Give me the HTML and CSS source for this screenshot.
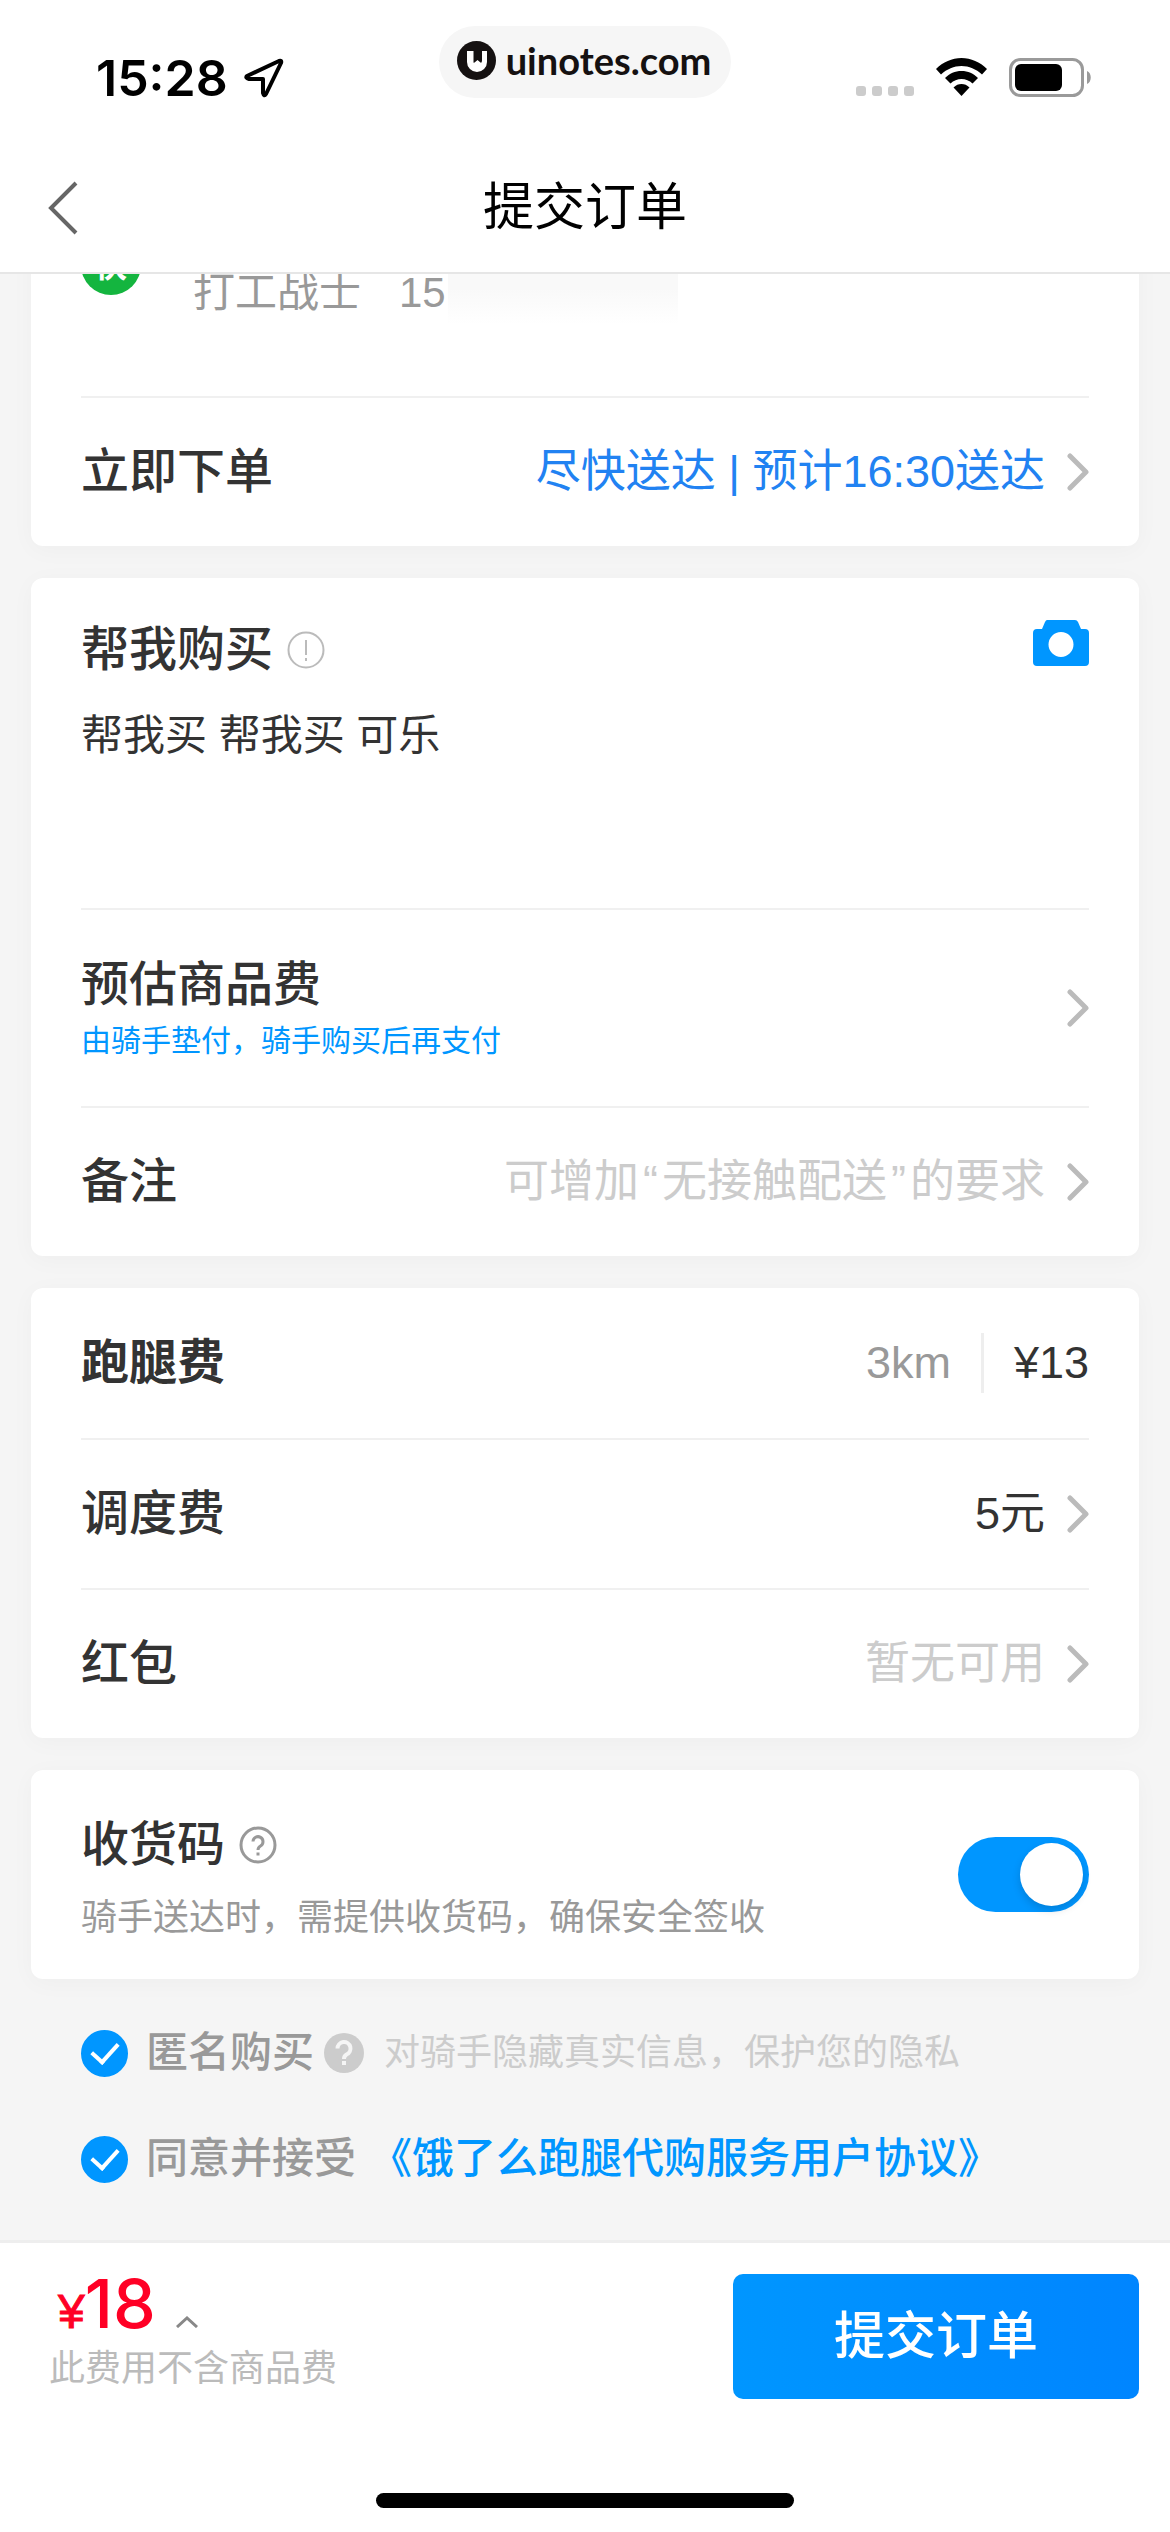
FILE: index.html
```html
<!DOCTYPE html>
<html lang="zh-CN">
<head>
    <meta charset="UTF-8">
    <meta name="viewport" content="width=device-width, initial-scale=1.0">
    <title>提交订单</title>
    <link rel="stylesheet" href="styles.css">
</head>
<body>

    <header class="top">
        <div class="status-bar">
            <div class="status-left">
                <span class="time">15:28</span>
                <svg width="40" height="40" viewBox="0 0 40 40" fill="none" stroke="#000" stroke-width="4" stroke-linejoin="round">
                    <path d="M3 18 L35 3 Q38 2 37 5 L22 36 Q20 39 19 35 V21 H5 Q1 20 3 18 Z"/>
                </svg>
            </div>
            <div class="site-badge">
                <svg width="39" height="39" viewBox="0 0 39 39">
                    <circle cx="19.500" cy="19.500" r="19.500" fill="#151111"/>
                    <path fill="#fff" d="M10 10h6.500v11c0 1 .5 1 1 .5l3-2.500 3 2.500c.5.5 1 .5 1-.5V10H30v11a10 10 0 0 1-20 0z"/>
                    <path fill="#151111" d="M17 9h8v12l-4-3-4 3z"/>
                </svg>
                <span>uinotes.com</span>
            </div>
            <div class="status-right">
                <span class="signal"><i></i><i></i><i></i><i></i></span>
                <svg class="wifi" width="51" height="38" viewBox="0 0 51 38">
                    <path d="M25.500 0C35 0 44 4 51 11l-5 5.500C40 11 33 8 25.500 8S11 11 5 16.500L0 11C7 4 16 0 25.500 0z"/>
                    <path d="M25.500 13c6.500 0 12 2.500 16.500 7l-5.500 5.500c-3-3-7-4.500-11-4.500s-8 1.500-11 4.500L9 20c4.500-4.500 10-7 16.500-7z"/>
                    <path d="M25.500 26c3 0 5.500 1 8 3.500L25.500 38l-8-8.500c2.500-2.500 5-3.500 8-3.500z"/>
                </svg>
                <svg width="83" height="40" viewBox="0 0 83 40">
                    <rect x="1.500" y="1.500" width="72" height="36" rx="10" fill="none" stroke="#9a9a9a" stroke-width="3"/>
                    <rect x="6" y="6" width="47" height="27" rx="6"/>
                    <path d="M78 13c5 2 5 11 0 13z" fill="#9a9a9a"/>
                </svg>
            </div>
        </div>
        <nav class="nav">
            <button class="back" type="button" aria-label="返回">
                <svg width="30" height="54" viewBox="0 0 30 54" fill="none" stroke="#666" stroke-width="4">
                    <path d="M28 2 L3 27 L28 52"/>
                </svg>
            </button>
            <h1>提交订单</h1>
        </nav>
    </header>

    <main>
        <section class="card card-first">
            <div class="receiver">
                <span class="receiver-icon">快</span>
                <span class="receiver-text">打工战士</span>
                <span class="receiver-text">15</span>
                <span class="phone-mask"></span>
            </div>
            <button class="row" type="button">
                <span class="label">立即下单</span>
                <span class="value value-time">尽快送达 | 预计16:30送达</span>
                <svg class="arrow" viewBox="0 0 22 38"><path d="M3 3 L19 19 L3 35"/></svg>
            </button>
        </section>

        <section class="card">
            <div class="buy">
                <div class="buy-head">
                    <label class="label" for="goods">帮我购买</label>
                    <button class="icon-btn" type="button" aria-label="购买说明">
                        <svg width="38" height="38" viewBox="0 0 38 38" fill="none" stroke="#bbb" stroke-width="2">
                            <circle cx="19" cy="19" r="17.500"/>
                            <path d="M19 9v15M19 27v3"/>
                        </svg>
                    </button>
                    <button class="icon-btn camera" type="button" aria-label="上传照片">
                        <svg width="56" height="46" viewBox="0 0 56 46">
                            <path fill="#0096ff" fill-rule="evenodd" d="M14 0h28q2 0 3 2l3 7h4q4 0 4 4v29q0 4-4 4H4q-4 0-4-4V13q0-4 4-4h5l3-7q1-2 2-2zM28 12a12.500 12.500 0 1 0 0 25a12.500 12.500 0 1 0 0-25z"/>
                        </svg>
                    </button>
                </div>
                <textarea id="goods" class="goods">帮我买 帮我买 可乐</textarea>
            </div>
            <button class="row row-tall" type="button">
                <span class="label">
                    预估商品费
                    <small>由骑手垫付，骑手购买后再支付</small>
                </span>
                <svg class="arrow" viewBox="0 0 22 38"><path d="M3 3 L19 19 L3 35"/></svg>
            </button>
            <button class="row" type="button">
                <span class="label">备注</span>
                <span class="value value-empty">可增加<span class="quote">“</span>无接触配送<span class="quote">”</span>的要求</span>
                <svg class="arrow" viewBox="0 0 22 38"><path d="M3 3 L19 19 L3 35"/></svg>
            </button>
        </section>

        <section class="card">
            <div class="row">
                <span class="label label-fee">跑腿费</span>
                <span class="value distance">3km</span>
                <span class="value fee">¥13</span>
            </div>
            <button class="row" type="button">
                <span class="label">调度费</span>
                <span class="value">5元</span>
                <svg class="arrow" viewBox="0 0 22 38"><path d="M3 3 L19 19 L3 35"/></svg>
            </button>
            <button class="row" type="button">
                <span class="label">红包</span>
                <span class="value value-empty">暂无可用</span>
                <svg class="arrow" viewBox="0 0 22 38"><path d="M3 3 L19 19 L3 35"/></svg>
            </button>
        </section>

        <section class="card code">
            <div class="code-text">
                <div class="code-head">
                    <label class="label" for="code-switch">收货码</label>
                    <button class="icon-btn" type="button" aria-label="收货码说明">
                        <svg width="38" height="38" viewBox="0 0 38 38" fill="none" stroke="#999" stroke-width="3">
                            <circle cx="19" cy="19" r="17"/>
                            <path d="M14 15.500a5 5 0 1 1 7.500 4.500q-2.500 1.500-2.500 4M19 26.500v3"/>
                        </svg>
                    </button>
                </div>
                <p>骑手送达时，需提供收货码，确保安全签收</p>
            </div>
            <input class="switch" type="checkbox" role="switch" id="code-switch" checked>
        </section>

        <div class="agree">
            <div class="agree-row">
                <input class="check" type="checkbox" id="anonymous" checked>
                <label for="anonymous">匿名购买</label>
                <button class="icon-btn" type="button" aria-label="匿名购买说明">
                    <svg width="40" height="40" viewBox="0 0 40 40" fill="none">
                        <circle cx="20" cy="20" r="20" fill="#ccc"/>
                        <path stroke="#f5f5f5" stroke-width="4" d="M13.500 15.500a6.500 6.500 0 1 1 9 6q-2.500 1.500-2.500 4.500M20 28v4"/>
                    </svg>
                </button>
                <span class="agree-tip">对骑手隐藏真实信息，保护您的隐私</span>
            </div>
            <div class="agree-row">
                <input class="check" type="checkbox" id="agreement" checked>
                <label for="agreement">同意并接受</label>
                <a href="#">《饿了么跑腿代购服务用户协议》</a>
            </div>
        </div>
    </main>

    <footer class="bottom">
        <div class="pay">
            <div class="total">
                <button class="price" type="button" aria-label="费用明细">
                    <span class="yen">¥</span><span class="amount">18</span>
                    <svg width="22" height="12" viewBox="0 0 22 12" fill="none" stroke="#888" stroke-width="3"><path d="M1 11 L11 2 L21 11"/></svg>
                </button>
                <p>此费用不含商品费</p>
            </div>
            <button class="submit" type="button">提交订单</button>
        </div>
        <div class="home-bar"></div>
    </footer>

</body>
</html>
```

FILE: styles.css
```css
* {
    box-sizing: border-box;
}

body {
    margin: 0;
    min-height: 100vh;
    display: flex;
    flex-direction: column;
    font-family: "Liberation Sans", "Noto Sans CJK SC", sans-serif;
    color: #333;
    background-color: #f5f5f5;
}

button {
    font: inherit;
    color: inherit;
    margin: 0;
    padding: 0;
    border: none;
    background: none;
    cursor: pointer;
}

svg {
    display: block;
    flex-shrink: 0;
}

p {
    margin: 0;
}

/* header */
.top {
    background-color: #fff;
    border-bottom: 2px solid #e6e6e6;
}

.status-bar {
    display: grid;
    grid-template-columns: 1fr auto 1fr;
    align-items: start;
    padding: 26px 78px 0;
    height: 148px;
}

.status-left {
    display: flex;
    align-items: center;
    gap: 16px;
    padding: 22px 0 0 18px;
}

.time {
    font-family: Inter, sans-serif;
    font-weight: 600;
    font-size: 50px;
    line-height: 60px;
    color: #000;
}

.site-badge {
    display: flex;
    align-items: center;
    gap: 10px;
    height: 72px;
    padding: 0 20px 4px 18px;
    border-radius: 36px;
    background-color: #f6f6f6;
    font-family: Lato, sans-serif;
    font-weight: 700;
    font-size: 38px;
    color: #151111;
}

.status-right {
    display: flex;
    justify-content: flex-end;
    align-items: flex-end;
    gap: 22px;
    padding-top: 32px;
}

.signal {
    display: flex;
    gap: 6px;
    margin-bottom: 2px;
}

.signal i {
    width: 10px;
    height: 10px;
    border-radius: 3px;
    background-color: #ccc;
}

.wifi {
    margin-bottom: 2px;
}

.nav {
    display: grid;
    grid-template-columns: 1fr auto 1fr;
    align-items: center;
    height: 124px;
    padding: 0 48px 4px;
}

.nav h1 {
    margin: 0;
    font-size: 51px;
    font-weight: 400;
    line-height: 72px;
    color: #000;
}

.back {
    justify-self: start;
}

/* cards */
main {
    flex: 1;
    overflow: hidden;
    padding: 0 31px;
}

.card {
    margin-bottom: 32px;
    padding: 0 50px;
    border-radius: 12px;
    background-color: #fff;
    box-shadow: 0 4px 24px rgba(0, 0, 0, 0.03);
}

/* scrolled under the header */
.card-first {
    margin-top: -50px;
}

.receiver {
    display: flex;
    height: 172px;
    padding-top: 11px;
}

.receiver-icon {
    width: 60px;
    height: 60px;
    margin-right: 52px;
    border-radius: 50%;
    background-color: #14b53f;
    color: #fff;
    font-size: 32px;
    font-weight: 700;
    line-height: 62px;
    text-align: center;
}

.receiver-text {
    margin-right: 38px;
    padding-top: 28px;
    font-size: 42px;
    line-height: 60px;
    color: #999;
}

.phone-mask {
    width: 230px;
    height: 90px;
    margin-left: -36px;
    background: linear-gradient(#f9f9f9 60%, #fff);
}

.row {
    display: flex;
    align-items: center;
    width: 100%;
    height: 150px;
    text-align: left;
}

.row-tall {
    height: 198px;
}

.receiver + .row,
.buy + .row,
.row + .row {
    border-top: 2px solid #f0f0f0;
}

.label {
    font-size: 48px;
    font-weight: 500;
    line-height: 60px;
}

.label small {
    display: block;
    margin-top: 6px;
    font-size: 30px;
    font-weight: 400;
    line-height: 40px;
    color: #0096ff;
}

.label-fee {
    font-weight: 700;
}

.value {
    margin-left: auto;
    font-size: 45px;
    line-height: 60px;
}

.value-time {
    color: #2182f2;
}

.value-empty {
    color: #ccc;
}

.quote {
    padding: 0 4px;
}

.arrow {
    width: 22px;
    height: 38px;
    margin-left: 22px;
    fill: none;
    stroke: #bbb;
    stroke-width: 5;
    stroke-linecap: round;
    stroke-linejoin: round;
}

.row-tall .arrow {
    margin-left: auto;
}

.distance {
    color: #999;
}

.fee {
    margin-left: 30px;
    padding-left: 30px;
    border-left: 3px solid #eee;
}

/* goods */
.buy {
    height: 330px;
    padding-top: 42px;
}

.buy-head,
.code-head {
    display: flex;
    align-items: center;
    gap: 14px;
}

.camera {
    align-self: flex-start;
    margin-left: auto;
}

.goods {
    display: block;
    width: 100%;
    height: 200px;
    margin-top: 26px;
    padding: 0;
    border: none;
    outline: none;
    resize: none;
    font: inherit;
    font-size: 42px;
    line-height: 60px;
    color: #333;
}

/* receiving code */
.code {
    display: flex;
    align-items: center;
    justify-content: space-between;
    height: 209px;
}

.code-text {
    padding-top: 8px;
}

.code p {
    margin-top: 18px;
    font-size: 36px;
    line-height: 50px;
    color: #999;
}

.switch {
    appearance: none;
    display: flex;
    justify-content: flex-end;
    width: 131px;
    height: 75px;
    margin: 0;
    padding: 6px;
    border-radius: 38px;
    background-color: #ccc;
}

.switch:checked {
    background-color: #0096ff;
}

.switch::before {
    content: "";
    width: 63px;
    height: 63px;
    border-radius: 50%;
    background-color: #fff;
    box-shadow: 0 4px 8px rgba(0, 0, 0, 0.15);
}

.switch:not(:checked) {
    justify-content: flex-start;
}

/* agreements */
.agree {
    display: flex;
    flex-direction: column;
    gap: 46px;
    padding: 12px 50px 50px;
}

.agree-row {
    display: flex;
    align-items: center;
    height: 60px;
    gap: 10px;
    font-size: 42px;
    font-weight: 500;
    line-height: 56px;
    color: #999;
}

.agree-row a {
    margin-left: 4px;
    color: #0096ff;
    text-decoration: none;
}

.agree-tip {
    margin-left: 10px;
    font-size: 36px;
    font-weight: 400;
    color: #ccc;
}

.check {
    appearance: none;
    display: grid;
    place-items: center;
    width: 47px;
    height: 47px;
    margin: 0 8px 0 0;
    border: 2px solid #ccc;
    border-radius: 50%;
}

.check:checked {
    border-color: #0096ff;
    background-color: #0096ff;
}

.check:checked::before {
    content: "";
    width: 12px;
    height: 22px;
    margin-bottom: 6px;
    border: solid #fff;
    border-width: 0 4px 4px 0;
    transform: rotate(42deg);
}

/* footer */
.bottom {
    background-color: #fff;
    border-top: 3px solid #eee;
}

.pay {
    display: flex;
    justify-content: space-between;
    align-items: flex-start;
    padding: 31px 31px 0 49px;
}

.total p {
    margin-top: 14px;
    font-size: 36px;
    line-height: 50px;
    color: #bbb;
}

.price {
    display: flex;
    align-items: baseline;
    height: 56px;
    padding-left: 9px;
    line-height: 58px;
    color: #ff0025;
}

.yen {
    font-size: 48px;
    -webkit-text-stroke: 1px #ff0025;
}

.amount {
    font-family: Inter, sans-serif;
    font-size: 68px;
    font-weight: 500;
}

.price svg {
    margin: 0 0 12px 20px;
}

.submit {
    width: 406px;
    height: 125px;
    border-radius: 10px;
    background: linear-gradient(to right, #0096ff, #0085ff);
    color: #fff;
    font-size: 51px;
    font-weight: 500;
    line-height: 72px;
}

.home-bar {
    width: 418px;
    height: 15px;
    margin: 94px auto 24px;
    border-radius: 8px;
    background-color: #000;
}
```
